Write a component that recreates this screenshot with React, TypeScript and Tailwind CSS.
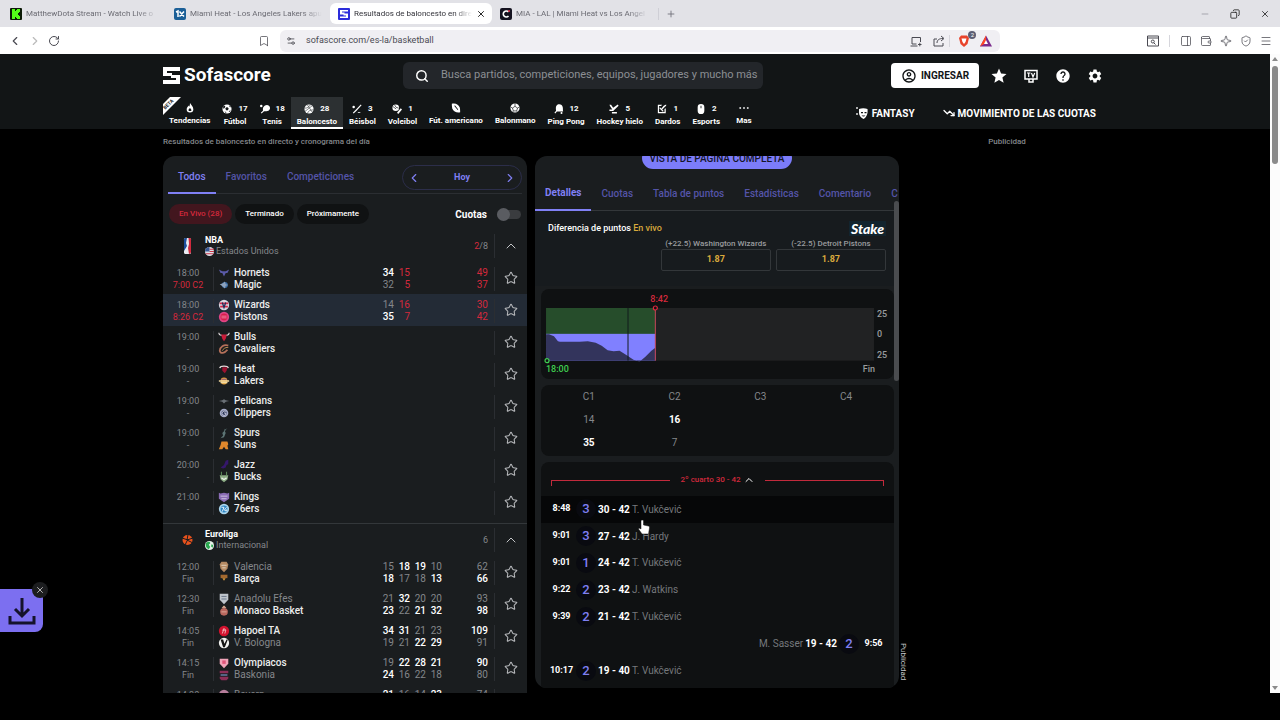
import type { ReactNode } from "react";
import {
  Bookmark,
  ChevronLeft,
  ChevronRight,
  ChevronUp,
  Copy,
  Menu,
  Minus,
  PanelRight,
  Plus,
  RotateCw,
  Search,
  Settings2,
  ShieldCheck,
  Sparkle,
  Star,
  TrendingDown,
  Wallet,
  X,
} from "lucide-react";
import { MdHelp, MdOutlineAccountCircle, MdSettings, MdStar } from "react-icons/md";

const browserTabs = [
  { title: "MatthewDota Stream - Watch Live o", icon: "kick" },
  { title: "Miami Heat - Los Angeles Lakers apu", icon: "onex" },
  { title: "Resultados de baloncesto en dire", icon: "sofa", active: true },
  { title: "MIA - LAL | Miami Heat vs Los Angel", icon: "c" },
];

const favicons: Record<string, ReactNode> = {
  kick: (
    <>
      <rect width="12" height="12" rx="1" fill="#0b1a06" />
      <path d="M2 1h3v2h1V2h1V1h3v3H9v1H8v2h1v1h1v3H7v-1H6V9H5v2H2z" fill="#53fc18" />
    </>
  ),
  onex: (
    <>
      <rect width="12" height="12" rx="2" fill="#1b5f97" />
      <path d="M2 4l2-1v6M5.500 3.500l4.500 5M10 3.500l-4.500 5" stroke="#fff" strokeWidth="1.500" fill="none" />
    </>
  ),
  sofa: (
    <>
      <rect width="12" height="12" rx="1" fill="#2c2ddb" />
      <path d="M2 2h8v1.500H4v1h2.500v2H2zM10 5.500V10H2V8.500h6v-1H5.500v-2z" fill="#fff" />
    </>
  ),
  c: (
    <>
      <rect width="12" height="12" rx="2" fill="#14121f" />
      <path d="M8.500 4A3 3 0 1 0 8.500 8" stroke="#fff" strokeWidth="1.600" fill="none" />
      <circle cx="9" cy="3" r="1" fill="#e5304c" />
    </>
  ),
};

function BrowserBar() {
  return (
    <div className="shrink-0 font-['Roboto',sans-serif] text-[9px]">
      <div className="flex h-[27px] items-center bg-[#e2e2e7] pl-0.5 text-[#6b6b73]">
        {browserTabs.map((t) => (
          <button
            key={t.title}
            className={
              t.active
                ? "flex h-[21px] w-[162px] items-center gap-1 rounded-md bg-white px-2 text-[#33333a]"
                : "flex h-[21px] w-[164px] items-center gap-1 px-2"
            }
          >
            <svg viewBox="0 0 12 12" className="size-3 shrink-0">
              {favicons[t.icon]}
            </svg>
            <span className="flex-1 text-left text-[8px] whitespace-nowrap mask-r-from-85%">
              {t.title}
            </span>
            {t.active && <X className="size-2.5 shrink-0 text-black" />}
          </button>
        ))}
        <span className="ml-0.5 h-3 w-px bg-[#cfcfd6]" />
        <button aria-label="Nueva pestaña" className="ml-[7px]">
          <Plus className="size-2.5" />
        </button>
        <div className="ml-auto flex gap-5 pr-2.5 text-[#222]">
          <Minus className="size-2.5 text-[#9a9aa2]" />
          <Copy className="size-2.5 -scale-x-100" />
          <X className="size-2.5" />
        </div>
      </div>
      <div className="flex h-[27px] items-center bg-white px-2 text-[#4a4a52]">
        <div className="flex w-[262px] shrink-0 items-center">
          <button aria-label="Atrás" className="w-5">
            <ChevronLeft className="size-3.5" />
          </button>
          <button aria-label="Adelante" className="w-5 text-[#bbb]">
            <ChevronRight className="size-3.5" />
          </button>
          <button aria-label="Recargar">
            <RotateCw className="size-3" />
          </button>
          <Bookmark className="ml-auto size-3" strokeWidth={1.5} />
        </div>
        <div className="ml-2.5 flex h-[22px] w-[57%] items-center rounded-md bg-[#f0eff3] px-1.5">
          <Settings2 className="size-2.5" />
          <input
            aria-label="Dirección"
            defaultValue="sofascore.com/es-la/basketball"
            className="ml-2.5 min-w-0 flex-1 outline-none"
          />
          <svg viewBox="0 0 12 12" className="size-3" fill="none" stroke="currentColor">
            <path d="M6.500 9H2V2.500h8.500V7M0.500 11h7M8 9.500h3.500M9.800 7.800v3.500" />
          </svg>
          <svg viewBox="0 0 12 12" className="ml-[11px] size-3" fill="none" stroke="currentColor">
            <path d="M4 4H1v7h9V8M4 8c0-3 2-4.500 6-4.500M8 1l3 2.500L8 6" />
          </svg>
          <span className="ml-1 h-3 w-px bg-[#d6d6dc]" />
          <span className="relative ml-2">
            <svg viewBox="0 0 12 12" className="size-3">
              <path d="M3 0.500h6l2 2.500-1.500 6L6 12 2.500 9 1 3z" fill="#e8432a" />
              <path d="M3.500 3.500h5L7.500 7 6 9 4.500 7z" fill="#fff" />
            </svg>
            <span className="absolute -top-1 -right-1.5 size-2 rounded-full bg-[#5b5d73] text-center text-[6px] leading-2 text-white">
              2
            </span>
          </span>
          <svg viewBox="0 0 12 12" className="mr-0.5 ml-2.5 size-3">
            <path d="M6 0.500L12 11.500H0z" fill="#7a2a8c" />
            <path d="M6 0.500L0 11.500l6-3.500z" fill="#ff4724" />
            <path d="M6 5l2 4H4z" fill="#fff" />
          </svg>
        </div>
        <div className="ml-auto flex items-center gap-2">
          <svg viewBox="0 0 12 12" className="size-3" fill="none" stroke="currentColor">
            <path d="M0.500 1h11v10H0.500zM0.500 3h11M7 8l1.500 1.500" />
            <circle cx="5.800" cy="6.500" r="1.500" />
          </svg>
          <span className="mx-0.5 h-3 w-px bg-[#d6d6dc]" />
          <PanelRight className="size-3" strokeWidth={1.5} />
          <Wallet className="size-3" strokeWidth={1.5} />
          <Sparkle className="size-3" strokeWidth={1.5} />
          <ShieldCheck className="size-3" strokeWidth={1.5} />
          <Menu className="size-3" strokeWidth={1.5} />
        </div>
      </div>
    </div>
  );
}

const sports = [
  {
    name: "Tendencias",
    icon: <path d="M6 0C7 2 10 4 10 7.500a4 4 0 0 1-8 0C2 5.500 3.500 4.500 4 3l1 1.500C5.800 3 6 1.500 6 0zM6 6c-1.500 1-2 2-1.500 3.500h3C8 8 7 7 6 6z" fillRule="evenodd" />,
  },
  {
    name: "Fútbol",
    count: 17,
    icon: (
      <>
        <circle cx="6" cy="6" r="5.500" />
        <path d="M6 3.500l2 1.500-.8 2.500H4.800L4 5zM1 3l2.500-1L4 3.500 2 6zM9 1.500L11 4l-2-.5zM3 9l2 .5V11zM10.500 7L9 9.500l-1-.5z" fill="#121516" />
      </>
    ),
  },
  {
    name: "Tenis",
    count: 18,
    icon: <path d="M1.500 1a1.500 1.500 0 1 1 0 3 1.500 1.500 0 0 1 0-3zM4 4c2-3 5-3.500 7-1.500s1 5-2 6C7 9 5.500 8.500 4.500 9L2 11.500 1 10.500 3.500 8C3.800 7 3 5.500 4 4z" />,
  },
  {
    name: "Baloncesto",
    count: 28,
    active: true,
    icon: (
      <>
        <circle cx="6" cy="6" r="5.500" />
        <path d="M1 9L10 2M4 1l6 9M8 0.500C6 4 4 5 0.500 5M11.500 7C8 7 5 8 4 11.500" stroke="#2f3336" strokeWidth="0.700" fill="none" />
      </>
    ),
  },
  {
    name: "Béisbol",
    count: 3,
    icon: <path d="M10.500 0.500l1 1L5.500 8 2 11.500 1 10.500 4.500 7zM2 2a1.500 1.500 0 1 1 0 3 1.500 1.500 0 0 1 0-3zM7 9.500h3v1H7z" />,
  },
  {
    name: "Voleibol",
    count: 1,
    icon: (
      <>
        <circle cx="4.500" cy="4.500" r="4" />
        <path d="M1 3l4 3M3 1l2 3 3 1" stroke="#121516" strokeWidth="0.800" fill="none" />
        <path d="M10.500 5l1.500 1.500L7.500 12 6 10.500z" />
      </>
    ),
  },
  {
    name: "Fút. americano",
    icon: <path d="M1 1c4-1.500 8.500 1 9.500 4.500.5 2 .5 4 .5 5.500-4 1-8-1-9.500-4.500C1 4.500 1 3 1 1zM4 3.500l4 5 .7-.7-4-5z" fillRule="evenodd" />,
  },
  {
    name: "Balonmano",
    icon: (
      <>
        <circle cx="6" cy="6" r="5.500" />
        <path d="M6 0.500V4L3 6 1 5M3 6l1 3.500L3 11M4 9.500h4L9 6l2-1M8 9.500L9 11M9 6L6 4" stroke="#121516" strokeWidth="0.800" fill="none" />
      </>
    ),
  },
  {
    name: "Ping Pong",
    count: 12,
    icon: <path d="M4 1c3-1.500 6 0 6.500 3 .4 2.500 0 3.500.5 5L3.500 9 1.500 11.500 0.500 10.500 2.500 8C2 5 2 2.500 4 1zM9 9.500a1.200 1.200 0 1 1 0 2.400 1.200 1.200 0 0 1 0-2.400z" />,
  },
  {
    name: "Hockey hielo",
    count: 5,
    icon: <path d="M0.500 1h2l2.500 3.500 5.500-4 1 1.500L6.500 7 5 8.500H0.500V6.500H4L1.500 3zM3.500 9.500h6V11.500h-6z" />,
  },
  {
    name: "Dardos",
    count: 1,
    icon: <path d="M1 1h5L5 2.500H2.500V9.500H9V6l1.500-1v6H1zM8 2L11 0.500V2L9 4 5.500 7.500 4.500 6.500zM3.500 4l4.500 4.500-1 .8L3 5.500z" />,
  },
  {
    name: "Esports",
    count: 2,
    icon: <path d="M6 0a4 4 0 0 0-4 4v4a4 4 0 0 0 8 0V4a4 4 0 0 0-4-4zM5.500 2h1v3h-1z" fillRule="evenodd" />,
  },
  {
    name: "Mas",
    icon: <path d="M0.500 5h2v2h-2zM5 5h2v2H5zM9.500 5h2v2h-2z" />,
  },
];

function Header() {
  return (
    <header className="relative shrink-0 bg-[#121516] px-4">
      <div className="mx-auto max-w-[944px]">
        <div className="flex h-[43px] items-center gap-2">
          <a href="#" className="flex w-[232px] items-center gap-1 text-[19px] font-bold text-white">
            <svg viewBox="0 0 17 17" className="size-[17px]" fill="currentColor">
              <path d="M0 0h17v4H4v2h5v3H0zM17 8v9H0v-4h13v-2H8V8z" />
            </svg>
            Sofascore
          </a>
          <label className="flex h-[27px] w-[360px] items-center gap-3 rounded-md bg-[#23262a] pr-0.5 pl-3">
            <Search className="size-3.5 text-white" strokeWidth={2.5} />
            <input
              aria-label="Buscar"
              placeholder="Busca partidos, competiciones, equipos, jugadores y mucho más"
              className="min-w-0 flex-1 text-[11px] outline-none placeholder:text-[#8c8f94]"
            />
          </label>
          <div className="ml-auto flex items-center gap-2 text-white">
            <button className="flex h-[25px] w-[88px] items-center justify-center gap-1 rounded-sm bg-white text-[10px] font-bold text-[#121516]">
              <MdOutlineAccountCircle className="size-4" />
              INGRESAR
            </button>
            <button aria-label="Favoritos" className="flex w-6 justify-center">
              <MdStar className="size-[18px]" />
            </button>
            <button aria-label="TV" className="flex w-6 justify-center">
              <svg viewBox="0 0 14 14" className="size-3.5">
                <path d="M1 1.500h12v8.500H1zM5 10h4v3H5z" fill="none" stroke="#fff" strokeWidth="1.500" />
                <path d="M3 4h3.500M4.700 4v4M7.500 4l1.500 4 1.700-4" fill="none" stroke="#fff" strokeWidth="1.200" />
              </svg>
            </button>
            <button aria-label="Ayuda" className="flex w-6 justify-center">
              <MdHelp className="size-4" />
            </button>
            <button aria-label="Ajustes" className="flex w-6 justify-center">
              <MdSettings className="size-4" />
            </button>
          </div>
        </div>
        <nav className="relative flex h-8 items-stretch text-[8px] font-bold text-white">
          <svg viewBox="0 0 18 18" className="absolute top-0 left-0 size-[18px]">
            <path d="M7 0h11L0 18V7z" fill="#fff" />
            <text x="6.500" y="8.500" fontSize="5" textAnchor="middle" fill="#121516" transform="rotate(-45 6.500 8.500)">
              BETA
            </text>
          </svg>
          {sports.map((s) => (
            <a
              key={s.name}
              href="#"
              className={
                s.active
                  ? "flex min-w-9 flex-col items-center border-b-2 border-white bg-[#2c3032] px-1.5 pt-1.5"
                  : "flex min-w-9 flex-col items-center border-b-2 border-transparent px-1.5 pt-1.5"
              }
            >
              <span className="flex h-[11px] items-center gap-1.5">
                <svg viewBox="0 0 12 12" className="size-2.5" fill="currentColor">
                  {s.icon}
                </svg>
                {s.count}
              </span>
              <span className="whitespace-nowrap leading-[15px]">{s.name}</span>
            </a>
          ))}
          <a href="#" className="ml-auto flex items-center gap-1 text-[10px]">
            <svg viewBox="0 0 12 12" className="size-3" fill="currentColor">
              <path d="M3 2c2.500-1 6-1 8.500 0 .5 4-.5 8-4 10-3-1.500-4.500-4-4.500-6zM5 5v1.200h2V5zM8.500 5v1.200h2V5zM5.500 8.500c1 1.200 3 1.200 4 0z" fillRule="evenodd" />
              <path d="M1 0v2M0 1h2M1 6v2M0 7h2" stroke="currentColor" strokeWidth="0.800" />
            </svg>
            FANTASY
          </a>
          <a href="#" className="mr-[11px] ml-7 flex items-center gap-[3px] text-[10px]">
            <TrendingDown className="size-3" strokeWidth={2.5} />
            MOVIMIENTO DE LAS CUOTAS
          </a>
        </nav>
      </div>
    </header>
  );
}

// 12x12 team badges
const crests: Record<string, ReactNode> = {
  Hornets: <path d="M0 2l4 2h4l4-2-2 4H8L6 10 4 6H2z" fill="#5a5aa8" />,
  Magic: (
    <>
      <circle cx="7" cy="6" r="3.500" fill="#3a6ea8" />
      <path d="M1 5l4-1 2-2 1 3 3 1-3 1-1 3-2-2z" fill="#8fa3bd" />
    </>
  ),
  Wizards: (
    <>
      <circle cx="6" cy="6" r="6" fill="#d6d9e2" />
      <path d="M1 4h10M1.500 8h9" stroke="#d42a49" strokeWidth="2" />
      <path d="M4 3l2 6 2-6" stroke="#1d2f5c" strokeWidth="1.500" fill="none" />
    </>
  ),
  Pistons: (
    <>
      <circle cx="6" cy="6" r="6" fill="#e04585" />
      <circle cx="6" cy="6" r="4" fill="#d81e4c" />
      <path d="M3 5h6M3 7h6" stroke="#f08aa6" strokeWidth="1" />
    </>
  ),
  Bulls: (
    <>
      <path d="M2.500 3h7L8 8 6 11 4 8z" fill="#c81d3a" />
      <path d="M0 1c0 2 1 3 3 3M12 1c0 2-1 3-3 3" stroke="#e6dfe0" strokeWidth="1.200" fill="none" />
    </>
  ),
  Cavaliers: (
    <>
      <path d="M11 2C6 0 1 4 1 8c1 4 6 3 9-1" stroke="#b4705a" strokeWidth="2" fill="none" />
      <path d="M11 4C7 4 5 6 4 8" stroke="#d6a05c" strokeWidth="1" fill="none" />
    </>
  ),
  Heat: (
    <>
      <path d="M1 5c1-3 9-3 10 0" stroke="#e8e0e0" strokeWidth="1.500" fill="none" />
      <path d="M4 4h6L9 8l-2 3-3-3z" fill="#9c1230" />
    </>
  ),
  Lakers: (
    <>
      <circle cx="6" cy="6" r="4" fill="#e8a33c" />
      <path d="M0 6h12M2 8h8" stroke="#f0d9a0" strokeWidth="1.500" />
      <path d="M3 4h6" stroke="#7b4a8e" strokeWidth="1" />
    </>
  ),
  Pelicans: <path d="M0 6l4-1 2-1 2 1 4 1-4 1-2 2-2-2z" fill="#6a7076" />,
  Clippers: (
    <>
      <circle cx="6" cy="6" r="5" fill="#a4aac6" />
      <circle cx="6" cy="6" r="3" fill="#2b3658" />
      <path d="M8 4.500A2.500 2.500 0 1 0 8 8V6H6" stroke="#dde" strokeWidth="1" fill="none" />
    </>
  ),
  Spurs: <path d="M10 0L7 4l1 2-2 5-4 1 3-3-1-3 2-2 1-3 1 1z" fill="#5c7474" />,
  Suns: <path d="M3 2h7l1 3-1 2 1 4H8L6 8l-2 3H0l2-5z" fill="#e0882c" />,
  Jazz: <path d="M8 1l3-1v5L9 6l-1 3-3 1-3-1 4-3z" fill="#35176b" />,
  Bucks: (
    <>
      <path d="M1 4h10l-1 5-4 3-4-3z" fill="#8bab84" />
      <path d="M3 0v4M9 0v4" stroke="#5d8a5a" strokeWidth="1.200" />
      <path d="M3 7l3 2 3-2" stroke="#e9efe6" strokeWidth="1.500" fill="none" />
    </>
  ),
  Kings: (
    <>
      <path d="M0 1l2 1 4-1 4 1 2-1v7l-6 4-6-4z" fill="#8a6cb5" />
      <path d="M2 5h8M3 8h6" stroke="#d5cfe3" strokeWidth="1" />
    </>
  ),
  "76ers": (
    <>
      <circle cx="6" cy="6" r="6" fill="#a9d4ec" />
      <circle cx="6" cy="6" r="4" fill="#2f86c4" />
      <path d="M3 4h3L4 9M9 4L7 6v2h2V6.500" stroke="#fff" fill="none" />
    </>
  ),
  Valencia: (
    <>
      <path d="M3 0h6l2 3-1 5-4 4-4-4-1-5z" fill="#b58a63" />
      <path d="M3 4h6M4 7h4" stroke="#e8dcc8" strokeWidth="1" />
    </>
  ),
  Barça: (
    <>
      <path d="M2 1h8v4H2z" fill="#a4692f" />
      <path d="M4 5h4l-2 3z" fill="#d99a3c" />
    </>
  ),
  "Anadolu Efes": (
    <>
      <path d="M1 0h10v7l-5 5-5-5z" fill="#bfc5cc" />
      <path d="M3 3h6M3 6h6" stroke="#5c6b80" strokeWidth="1" />
    </>
  ),
  "Monaco Basket": (
    <>
      <circle cx="6" cy="7" r="4.500" fill="#b9685e" />
      <path d="M4 2l2-2 2 2zM3 7h6" stroke="#e0b0a0" fill="#d8a04c" />
    </>
  ),
  "Hapoel TA": (
    <>
      <circle cx="6" cy="6" r="6" fill="#d3122e" />
      <path d="M4 9l2-6 2 2-1 4M4 5h4" stroke="#f3c4c9" fill="none" />
    </>
  ),
  "V. Bologna": (
    <>
      <circle cx="6" cy="6" r="6" fill="#f2f2f0" />
      <path d="M2 2h3l1.500 5L9 2h1.500L7 11H5z" fill="#141414" />
    </>
  ),
  Olympiacos: (
    <>
      <path d="M1 1h10v6l-5 5-5-5z" fill="#f0a4b8" />
      <path d="M4 3h4v4H4z" fill="#e0557a" />
    </>
  ),
  Baskonia: (
    <>
      <path d="M1 1h10v3H1zM1 8h10v2l-2 2H3l-2-2z" fill="#8c2f58" />
      <path d="M2 6h8" stroke="#5f7296" strokeWidth="2" />
    </>
  ),
  Bayern: <circle cx="6" cy="6" r="6" fill="#b57c9a" />,
  Zalgiris: <circle cx="6" cy="6" r="6" fill="#2f7a4a" />,
};

type Side = { name: string; quarters?: number[]; total?: number };
type Match = { time: string; status: string; home: Side; away: Side; live?: boolean; selected?: boolean };

const nba: Match[] = [
  {
    time: "18:00",
    status: "7:00 C2",
    live: true,
    home: { name: "Hornets", quarters: [34, 15], total: 49 },
    away: { name: "Magic", quarters: [32, 5], total: 37 },
  },
  {
    time: "18:00",
    status: "8:26 C2",
    live: true,
    selected: true,
    home: { name: "Wizards", quarters: [14, 16], total: 30 },
    away: { name: "Pistons", quarters: [35, 7], total: 42 },
  },
  { time: "19:00", status: "-", home: { name: "Bulls" }, away: { name: "Cavaliers" } },
  { time: "19:00", status: "-", home: { name: "Heat" }, away: { name: "Lakers" } },
  { time: "19:00", status: "-", home: { name: "Pelicans" }, away: { name: "Clippers" } },
  { time: "19:00", status: "-", home: { name: "Spurs" }, away: { name: "Suns" } },
  { time: "20:00", status: "-", home: { name: "Jazz" }, away: { name: "Bucks" } },
  { time: "21:00", status: "-", home: { name: "Kings" }, away: { name: "76ers" } },
];

const euroliga: Match[] = [
  {
    time: "12:00",
    status: "Fin",
    home: { name: "Valencia", quarters: [15, 18, 19, 10], total: 62 },
    away: { name: "Barça", quarters: [18, 17, 18, 13], total: 66 },
  },
  {
    time: "12:30",
    status: "Fin",
    home: { name: "Anadolu Efes", quarters: [21, 32, 20, 20], total: 93 },
    away: { name: "Monaco Basket", quarters: [23, 22, 21, 32], total: 98 },
  },
  {
    time: "14:05",
    status: "Fin",
    home: { name: "Hapoel TA", quarters: [34, 31, 21, 23], total: 109 },
    away: { name: "V. Bologna", quarters: [19, 21, 22, 29], total: 91 },
  },
  {
    time: "14:15",
    status: "Fin",
    home: { name: "Olympiacos", quarters: [19, 22, 28, 21], total: 90 },
    away: { name: "Baskonia", quarters: [24, 16, 22, 18], total: 80 },
  },
  {
    time: "14:30",
    status: "Fin",
    home: { name: "Bayern", quarters: [21, 16, 14, 23], total: 74 },
    away: { name: "Zalgiris", quarters: [18, 20, 17, 22], total: 77 },
  },
];

function SideRow({ side, rival, live }: { side: Side; rival: Side; live?: boolean }) {
  const won = (side.total ?? 0) > (rival.total ?? 0);
  const dim = side.total !== undefined && !live && !won;
  const quarters = side.quarters ?? [];

  return (
    <div className="flex h-3 items-center">
      <svg viewBox="-1 -1 14 14" className="size-3">
        {crests[side.name]}
      </svg>
      <span className={dim ? "ml-1 flex-1 text-[#84878b]" : "ml-1 flex-1 font-medium text-[#eceded]"}>
        {side.name}
      </span>
      {[0, 1, 2, 3].map((i) => {
        let color = "text-[#84878b]";
        if (live && i === 1) color = "text-[#d3293c]";
        else if (quarters[i] > (rival.quarters?.[i] ?? 0)) color = "font-medium text-white";
        return (
          <span key={i} className={`w-4 text-right ${color}`}>
            {quarters[i]}
          </span>
        );
      })}
      <span
        className={`w-[46px] text-right ${live ? "text-[#d3293c]" : won ? "font-medium text-white" : "text-[#84878b]"}`}
      >
        {side.total}
      </span>
    </div>
  );
}

function MatchRow({ match }: { match: Match }) {
  return (
    <li className={match.selected ? "flex h-8 items-center bg-[#232b36]" : "flex h-8 items-center"}>
      <a href="#" className="flex flex-1 items-center pt-px">
        <span className="w-[50px] text-center text-[9px] leading-3 text-[#84878b]">
          <span className="block">{match.time}</span>
          <span className={match.live ? "block text-[#d3293c]" : "block"}>{match.status}</span>
        </span>
        <span className="flex-1 border-x border-[#2b2e32] pr-1.5 pl-1 text-[10px] leading-3">
          <SideRow side={match.home} rival={match.away} live={match.live} />
          <SideRow side={match.away} rival={match.home} live={match.live} />
        </span>
      </a>
      <button aria-label="Seguir partido" className="flex w-8 justify-center text-[#b4b6b9]">
        <Star className="size-3.5" strokeWidth={1.8} />
      </button>
    </li>
  );
}

type LeagueProps = {
  name: string;
  country: string;
  flag: ReactNode;
  logo: ReactNode;
  count: ReactNode;
  matches: Match[];
};

function League({ name, country, flag, logo, count, matches }: LeagueProps) {
  return (
    <section className="border-b border-[#33373a] pb-[5px]">
      <div className="flex h-8 items-center text-[9px] leading-[11px]">
        <svg viewBox="0 0 16 16" className="ml-4 size-4">
          {logo}
        </svg>
        <div className="ml-[10px] flex-1">
          <h2 className="font-bold text-white">{name}</h2>
          <p className="flex items-center gap-0.5 text-[#84878b]">
            <svg viewBox="0 0 12 12" className="size-[9px]">
              {flag}
            </svg>
            {country}
          </p>
        </div>
        <span className="border-r border-[#2b2e32] pr-1.5 leading-6 text-[#84878b]">{count}</span>
        <button aria-label="Contraer" className="flex w-8 justify-center text-[#c4c6c8]">
          <ChevronUp className="size-4" strokeWidth={1.5} />
        </button>
      </div>
      <ul>
        {matches.map((m) => (
          <MatchRow key={m.home.name} match={m} />
        ))}
      </ul>
    </section>
  );
}

function MatchList() {
  return (
    <div className="overflow-hidden rounded-t-xl bg-[#1a1d1f]">
      <div className="mx-[5px] flex h-[38px] items-stretch border-b border-[#2b2e32] text-[10px] font-medium text-[#5454a8]">
        <button className="-mb-px border-b-2 border-[#8080f5] px-2.5 pt-1 text-[#8080f5]">Todos</button>
        <button className="px-2.5 pt-1">Favoritos</button>
        <button className="px-2.5 pt-1">Competiciones</button>
        <div className="mt-[9px] ml-auto flex h-[25px] w-[120px] items-center justify-between rounded-full border border-[#2c2e4a] px-1 font-bold text-[#7f7ff2]">
          <button aria-label="Día anterior">
            <ChevronLeft className="size-3.5" />
          </button>
          <span className="text-[9px]">Hoy</span>
          <button aria-label="Día siguiente">
            <ChevronRight className="size-3.5" />
          </button>
        </div>
      </div>
      <div className="flex h-9 items-center gap-[3px] px-1.5 pt-1 text-[8px] font-medium text-white">
        <button className="h-5 rounded-full bg-[#42161e] px-2.5 text-[#d3293c]">En Vivo (28)</button>
        <button className="h-5 rounded-full bg-[#101213] px-2.5">Terminado</button>
        <button className="h-5 rounded-full bg-[#101213] px-2.5">Próximamente</button>
        <label className="ml-auto flex items-center gap-2.5 text-[10px] font-bold">
          Cuotas
          <input
            type="checkbox"
            role="switch"
            className="h-[9px] w-6 appearance-none rounded-full bg-[#3a3c3f] before:-mt-[2px] before:block before:size-[13px] before:rounded-full before:bg-[#5a5c61]"
          />
        </label>
      </div>
      <League
        name="NBA"
        country="Estados Unidos"
        count={
          <>
            <span className="text-[#d3293c]">2</span>/8
          </>
        }
        logo={
          <>
            <rect x="5" width="7" height="16" rx="1.500" fill="#e9ecf2" />
            <path d="M5 1.500C5 .5 6 0 7 0h1L7 5l1 3-3 5z" fill="#1d4f9c" />
            <path d="M9.500 0H11c1 0 1 1 1 1.500V14c0 1-1 2-2 2l-1-6 1-4z" fill="#cf2a3e" />
          </>
        }
        flag={
          <>
            <circle cx="6" cy="6" r="6" fill="#dfe2e8" />
            <path d="M6 3h6M6 6h6M1 9h10" stroke="#c9364a" strokeWidth="1.500" />
            <path d="M0 6a6 6 0 0 1 6-6v6z" fill="#3a5a96" />
          </>
        }
        matches={nba}
      />
      <League
        name="Euroliga"
        country="Internacional"
        count={6}
        logo={
          <>
            <circle cx="8.500" cy="8" r="5" fill="#e8521d" />
            <path d="M3 6l6 2M9 2.500L8 8l6-2M8 8l6 3M8.500 8L6 13" stroke="#1a1d1f" strokeWidth="1" fill="none" />
          </>
        }
        flag={
          <>
            <circle cx="6" cy="6" r="6" fill="#e6f4ea" />
            <path d="M2 2c3-2 5-1 5 1L5 5l2 3-2 3C1 9 0 5 2 2zM9 4l2 2-1 3-2-2z" fill="#2aa84f" />
          </>
        }
        matches={euroliga}
      />
    </div>
  );
}

const detailTabs = ["Cuotas", "Tabla de puntos", "Estadísticas", "Comentario", "C"];

const odds = [
  { label: "(+22.5) Washington Wizards", value: "1.87" },
  { label: "(-22.5) Detroit Pistons", value: "1.87" },
];

const plays = [
  { time: "8:48", points: 3, score: "30 - 42", player: "T. Vukčević", hover: true },
  { time: "9:01", points: 3, score: "27 - 42", player: "J. Hardy" },
  { time: "9:01", points: 1, score: "24 - 42", player: "T. Vukčević" },
  { time: "9:22", points: 2, score: "23 - 42", player: "J. Watkins" },
  { time: "9:39", points: 2, score: "21 - 42", player: "T. Vukčević" },
  { time: "9:56", points: 2, score: "19 - 42", player: "M. Sasser", away: true },
  { time: "10:17", points: 2, score: "19 - 40", player: "T. Vukčević" },
];

function MomentumChart() {
  return (
    <div className="rounded-lg bg-[#0f1112] px-[5px] py-1 text-[9px] leading-3 font-medium">
      <div className="flex">
        <div className="w-[33%] text-right text-[#d3293c]">
          <span className="inline-block translate-x-1/2">8:42</span>
        </div>
      </div>
      <div className="mt-[3px] flex gap-[3px]">
        <svg viewBox="0 0 330 53" className="min-w-0 flex-1 overflow-visible">
          <rect width="330" height="53" fill="#212223" />
          <rect width="110" height="27" fill="#264d2b" />
          <rect y="26" width="110" height="27" fill="#8080ff" />
          <path
            d="M0 26.500h3l5 2 4 5 2 .5h20l8-.5 8 1.500 6 3 6 4.500 6 1 6-.5 8 5 6 4 6 2 6-5 6-6 4-3V53H0z"
            fill="#33345c"
          />
          <path d="M82.500 0v53" stroke="#101b1c" />
          <path d="M110 1v52" stroke="#c8475a" />
          <circle cx="110" cy="0" r="2" fill="#0f1112" stroke="#e0293f" strokeWidth="1.200" />
          <circle cx="1" cy="53" r="2" fill="#0f1112" stroke="#3fce50" strokeWidth="1.200" />
        </svg>
        <div className="flex w-3 flex-col justify-between text-[#9a9c9f]">
          <span>25</span>
          <span>0</span>
          <span>25</span>
        </div>
      </div>
      <div className="flex justify-between pt-0.5 pr-[14px]">
        <span className="text-[#3fce50]">18:00</span>
        <span className="text-[#9a9c9f]">Fin</span>
      </div>
    </div>
  );
}

function MatchDetail() {
  return (
    <div className="relative mb-[5px] flex min-h-0 flex-col overflow-hidden rounded-xl bg-[#1a1d1f]">
      <button className="-mt-[9px] h-[22px] w-[150px] shrink-0 self-center rounded-full bg-[#7c7cfa] text-[10px] font-medium text-[#14152a]">
        VISTA DE PAGINA COMPLETA
      </button>
      <div className="mt-[7px] flex h-[35px] shrink-0 items-stretch border-b border-[#33373a] text-[10px] font-medium whitespace-nowrap text-[#5454a8]">
        <button className="-mb-px border-b-2 border-[#8080f5] px-2.5 font-bold text-[#8080f5]">
          Detalles
        </button>
        {detailTabs.map((t) => (
          <button key={t} className="px-2.5">
            {t}
          </button>
        ))}
      </div>

      <section className="shrink-0 bg-[#171b1e] px-[13px] pt-2.5 pb-[15px] text-[9px]">
        <div className="flex h-[15px] items-center justify-between">
          <h3 className="font-medium text-white">
            Diferencia de puntos <span className="text-[#d9a93c]">En vivo</span>
          </h3>
          <span className="bg-[#12242e] px-0.5 font-['Lato',sans-serif] text-[14px] leading-[15px] font-black text-white italic">
            Stake
          </span>
        </div>
        <div className="ml-auto grid w-2/3 grid-cols-2 gap-[5px]">
          {odds.map((o) => (
            <div key={o.label} className="text-center">
              <p className="pt-0.5 text-[8px] leading-[11px] font-medium whitespace-nowrap text-[#9a9c9f]">
                {o.label}
              </p>
              <button className="h-[22px] w-full rounded-xs border border-[#33373a] font-bold text-[#d9a93c]">
                {o.value}
              </button>
            </div>
          ))}
        </div>
      </section>

      <div className="flex min-h-0 flex-1 flex-col gap-1.5 pt-[3px] pr-[5px] pl-1.5">
        <MomentumChart />
        <div className="rounded-lg bg-[#0f1112] px-[5px] pb-0.5">
          <table className="w-full table-fixed text-center text-[10px] text-[#84878b]">
            <thead>
              <tr className="h-[23px]">
                <th className="font-normal">C1</th>
                <th className="font-normal">C2</th>
                <th className="font-normal">C3</th>
                <th className="font-normal">C4</th>
              </tr>
            </thead>
            <tbody>
              <tr className="h-[23px]">
                <td>14</td>
                <td className="font-bold text-white">16</td>
                <td />
                <td />
              </tr>
              <tr className="h-[23px]">
                <td className="font-bold text-white">35</td>
                <td>7</td>
                <td />
                <td />
              </tr>
            </tbody>
          </table>
        </div>

        <section className="flex min-h-0 flex-1 flex-col rounded-t-lg bg-[#0f1112] pb-1">
          <div className="flex h-[34px] shrink-0 items-center px-2.5 text-[8px] text-[#d3293c]">
            <span className="mt-2 h-1.5 flex-1 border-t border-l border-[#c22a3c]" />
            <button className="mt-0.5 flex items-center gap-0.5 px-2.5 font-medium">
              2º cuarto 30 - 42
              <ChevronUp className="size-3 text-white" />
            </button>
            <span className="mt-2 h-1.5 flex-1 border-t border-r border-[#c22a3c]" />
          </div>
          <ol className="flex flex-1 flex-col">
            {plays.map((p) => (
              <li
                key={p.score}
                className={`flex flex-1 items-center px-1.5 text-[10px] ${p.away ? "flex-row-reverse" : ""} ${p.hover ? "bg-[#060708]" : ""}`}
              >
                <span className="w-[29px] text-center text-[9px] font-bold text-white">{p.time}</span>
                <span className="flex size-5 items-center justify-center rounded-full bg-[#090a10] text-[13px] font-medium text-[#7f7ff2]">
                  {p.points}
                </span>
                <span className="mx-0.5 font-bold text-white">{p.score}</span>
                <span className="text-[#75787c]">{p.player}</span>
              </li>
            ))}
          </ol>
        </section>
      </div>
      <span className="absolute top-[45px] right-0 h-[180px] w-[5px] rounded-full bg-[#4a4c4f]" />
      <svg viewBox="0 0 12 16" className="absolute top-[363px] left-[103px] h-4 w-3">
        <path
          d="M4 1c1 0 1.500.5 1.500 1v4l5 1c1 .3 1 1 1 2l-1 6H4L.5 10c0-1 1-1.300 2.500 0V2c0-.5.500-1 1-1z"
          fill="#fff"
          stroke="#111"
          strokeWidth="0.500"
        />
      </svg>
    </div>
  );
}

export default function App() {
  return (
    <div className="flex h-screen flex-col overflow-hidden bg-black font-['Roboto','Liberation_Sans',sans-serif]">
      <BrowserBar />
      <div className="flex min-h-0 flex-1">
        <div className="flex min-w-0 flex-1 flex-col">
          <Header />
          <main className="flex min-h-0 flex-1 flex-col px-4">
            <div className="mx-auto grid min-h-0 w-full max-w-[944px] flex-1 grid-cols-[364fr_364fr_200fr] grid-rows-[27px_minmax(0,1fr)] gap-x-2">
              <h1 className="col-span-2 pt-[7px] text-[8px] leading-3 font-medium text-[#84878b]">
                Resultados de baloncesto en directo y cronograma del día
              </h1>
              <p className="pt-[7px] text-center text-[8px] leading-3 font-medium text-[#84878b]">
                Publicidad
              </p>
              <MatchList />
              <MatchDetail />
              <aside className="relative">
                <span className="absolute bottom-[13px] -left-2 text-[8px] leading-2 text-[#c4c6c8] [writing-mode:vertical-rl]">
                  Publicidad
                </span>
              </aside>
            </div>
          </main>
        </div>
        <div className="flex w-2.5 flex-col items-center bg-[#fcfcfc] py-[3px] text-[#8a8a8a]">
          <svg viewBox="0 0 6 4" className="w-1.5 fill-current">
            <path d="M3 0l3 4H0z" />
          </svg>
          <span className="mt-[5px] h-[98px] w-1.5 rounded-full bg-current" />
          <svg viewBox="0 0 6 4" className="mt-auto w-1.5 fill-current">
            <path d="M0 0h6L3 4z" />
          </svg>
        </div>
      </div>
      <div className="h-[27px] shrink-0" />

      <div className="fixed bottom-[88px] left-0">
        <button
          aria-label="Descargar"
          className="flex h-[43px] w-[43px] items-center justify-center rounded-r-lg bg-[#7c6ff0]"
        >
          <svg viewBox="0 0 28 28" className="size-7" fill="none" stroke="#15132b" strokeWidth="3">
            <path d="M14 1v17M7 12l7 7 7-7M2 19v7h24v-7" />
          </svg>
        </button>
        <button
          aria-label="Cerrar"
          className="absolute -top-[7px] -right-[5px] flex size-4 items-center justify-center rounded-full bg-[#1c1d1f] text-[#d0d0d0]"
        >
          <X className="size-2.5" />
        </button>
      </div>
    </div>
  );
}
